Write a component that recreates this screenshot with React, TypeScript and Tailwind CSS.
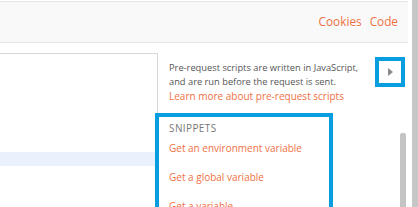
import * as React from "react";

const orange = "text-[#f0703f]";

export default function App() {
  return (
    <div className="flex w-[418px] h-[207px] overflow-hidden bg-white font-['Open_Sans',sans-serif]">
      <div className="flex flex-col w-[408px] shrink-0">
        <div className="mt-[1px] h-[42px] shrink-0 flex items-center justify-end gap-[8px] pr-[10px] bg-[#f9f9f9] border-y border-[#e6e6e6]">
          <span className={`text-[11.8px] ${orange}`}>Cookies</span>
          <span className={`text-[11.8px] ${orange}`}>Code</span>
        </div>
        <div className="flex flex-1 pt-[10px]">
          <div className="w-[158px] shrink-0">
            <div className="h-[200px] border border-l-0 border-[#d6d6d6] pt-[98px]">
              <div className="h-[14px] bg-[#e9f1fd]" />
            </div>
          </div>
          <div className="flex flex-col flex-1 min-w-0">
            <div className="flex pl-[11px]">
              <div className="w-[205px] pt-[8px] text-[9.3px] leading-[14px] text-[#555]">
                <p>Pre-request scripts are written in JavaScript, and are run before the request is sent.</p>
                <p className={`text-[10px] ${orange}`}>Learn more about pre-request scripts</p>
              </div>
              <div className="ml-auto mr-[3px] mt-[4px] w-[30px] h-[30px] border-4 border-[#089ddf] bg-white flex items-center justify-center">
                <svg width="5" height="8" viewBox="0 0 5 8">
                  <path d="M0 0 L5 4 L0 8 Z" fill="#8a8a8a" />
                </svg>
              </div>
            </div>
            <div className="flex flex-1 mt-[10px]">
              <div className="-ml-[3px] w-[178px] border-4 border-b-0 border-[#089ddf] pl-[10px] pt-[4px]">
                <div className="text-[10px] leading-[14px] tracking-[0.4px] text-[#777]">SNIPPETS</div>
                <ul className={`mt-[6px] flex flex-col gap-[15px] text-[10px] leading-[14px] ${orange}`}>
                  <li>Get an environment variable</li>
                  <li>Get a global variable</li>
                  <li>Get a variable</li>
                </ul>
              </div>
              <div className="ml-auto mr-[2px] mt-[20px] w-[6px] rounded-t-[2px] bg-[#c4c4c4]" />
            </div>
          </div>
        </div>
      </div>
      <div className="w-[4px] shrink-0" />
      <div className="w-[6px] shrink-0 bg-[#c6c6c6]" />
    </div>
  );
}
